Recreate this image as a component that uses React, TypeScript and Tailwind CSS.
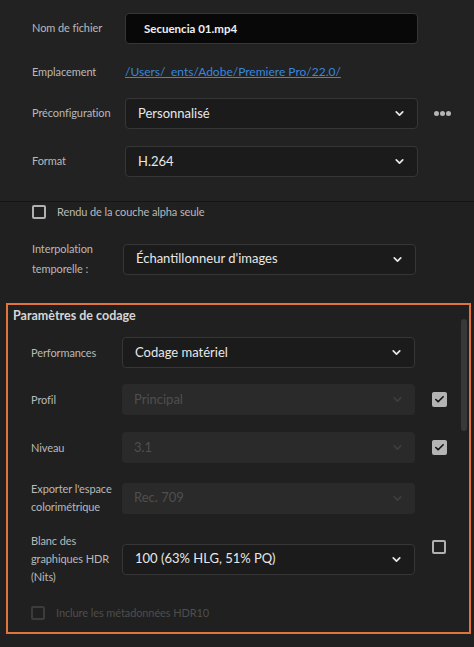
import { ChevronDown, Check } from "lucide-react";

const font = { fontFamily: "Lato, 'Noto Sans', sans-serif" };

function Chevron({ disabled }: { disabled?: boolean }) {
  return (
    <ChevronDown
      size={13}
      strokeWidth={3.2}
      className={disabled ? "text-[#3e3e3e]" : "text-[#e6e6e6]"}
    />
  );
}

function Select({ value, disabled }: { value: string; disabled?: boolean }) {
  return (
    <div
      className={
        disabled
          ? "flex h-[31px] w-[293px] shrink-0 items-center justify-between rounded-[4px] bg-[#2a2a2a] pl-[12px] pr-[11px] text-[13px] text-[#4f4f4f]"
          : "flex h-[31px] w-[293px] shrink-0 items-center justify-between rounded-[4px] border border-[#363636] bg-[#1b1b1b] pl-[12px] pr-[11px] text-[13px] text-[#e8e8e8]"
      }
    >
      <span>{value}</span>
      <Chevron disabled={disabled} />
    </div>
  );
}

function Box({ checked, disabled }: { checked?: boolean; disabled?: boolean }) {
  if (checked) {
    return (
      <div className="flex h-[15px] w-[15px] shrink-0 items-center justify-center rounded-[2px] bg-[#b4b4b4]">
        <Check size={11} strokeWidth={3.5} className="text-[#111]" />
      </div>
    );
  }
  return (
    <div
      className={
        disabled
          ? "h-[14px] w-[14px] shrink-0 rounded-[2px] border-2 border-[#3c3c3c]"
          : "h-[14px] w-[14px] shrink-0 rounded-[2px] border-2 border-[#b0b0b0]"
      }
    />
  );
}

function Row({
  label,
  children,
  className,
  lh = "leading-[18px]",
}: {
  label: React.ReactNode;
  children: React.ReactNode;
  className?: string;
  lh?: string;
}) {
  return (
    <div className={"flex items-center " + (className ?? "")}>
      <div className={"w-[91px] shrink-0 text-[11px] tracking-[-0.1px] text-[#b9b9b9] " + lh}>
        {label}
      </div>
      {children}
    </div>
  );
}

export default function App() {
  return (
    <div className="h-[647px] w-[474px] overflow-hidden bg-[#202020]" style={font}>
      <div className="bg-[#222222] pb-[24px] pl-[32px] pt-[13px]">
        <div className="flex items-center">
          <div className="w-[93px] shrink-0 text-[11px] tracking-[-0.1px] text-[#b9b9b9]">Nom de fichier</div>
          <div className="flex h-[31px] w-[293px] items-center rounded-[4px] border border-[#363636] bg-[#080808] pl-[18px] text-[11.5px] font-bold text-[#f0f0f0]">
            Secuencia 01.mp4
          </div>
        </div>
        <div className="mt-[18px] flex h-[20px] items-center">
          <div className="w-[93px] shrink-0 text-[11px] tracking-[-0.1px] text-[#b9b9b9]">Emplacement</div>
          <a className="text-[12px] text-[#3b86db] underline decoration-[#3b86db]" href="#">
            /Users/_ents/Adobe/Premiere Pro/22.0/
          </a>
        </div>
        <div className="mt-[16px] flex items-center">
          <div className="w-[93px] shrink-0 text-[11px] tracking-[-0.1px] text-[#b9b9b9]">Préconfiguration</div>
          <Select value="Personnalisé" />
          <div className="ml-[16px] flex gap-[1px]">
            <span className="h-[5px] w-[5px] rounded-full bg-[#b5b5b5]" />
            <span className="h-[5px] w-[5px] rounded-full bg-[#b5b5b5]" />
            <span className="h-[5px] w-[5px] rounded-full bg-[#b5b5b5]" />
          </div>
        </div>
        <div className="mt-[17px] flex items-center">
          <div className="w-[93px] shrink-0 text-[11px] tracking-[-0.1px] text-[#b9b9b9]">Format</div>
          <Select value="H.264" />
        </div>
      </div>
      <div className="h-px bg-[#141414]" />

      <div className="pl-[32px] pt-[3px]">
        <div className="flex h-[14px] items-center gap-[11px]">
          <Box />
          <span className="text-[11px] tracking-[-0.1px] text-[#b9b9b9]">Rendu de la couche alpha seule</span>
        </div>
      </div>

      <div className="mt-[20px] pl-[32px]">
        <Row label={<>Interpolation<br />temporelle :</>} lh="leading-[20px]">
          <Select value="Échantillonneur d'images" />
        </Row>
      </div>

      <div className="ml-[6px] mr-[3px] mt-[24px] flex h-[331px] border-2 border-[#e0743c]">
        <div className="flex-1 pl-[5px]">
          <div className="text-[12.5px] font-bold leading-[22px] text-[#d6d6d6]">
            Paramètres de codage
          </div>
          <div className="pl-[18px]">
            <Row label="Performances" className="mt-[10px]">
              <Select value="Codage matériel" />
            </Row>
            <Row label="Profil" className="mt-[16px]">
              <Select value="Principal" disabled />
              <div className="ml-[17px]">
                <Box checked />
              </div>
            </Row>
            <Row label="Niveau" className="mt-[17px]">
              <Select value="3.1" disabled />
              <div className="ml-[17px]">
                <Box checked />
              </div>
            </Row>
            <Row label={<>Exporter l'espace<br />colorimétrique</>} className="mt-[17px]">
              <Select value="Rec. 709" disabled />
            </Row>
            <Row
              label={<>Blanc des<br />graphiques HDR<br />(Nits)</>}
              className="mt-[16px]"
            >
              <Select value="100 (63% HLG, 51% PQ)" />
              <div className="ml-[17px] self-start pt-[8px]">
                <Box />
              </div>
            </Row>
            <div className="mt-[20px] flex h-[14px] items-center gap-[11px]">
              <Box disabled />
              <span className="text-[11px] tracking-[-0.1px] text-[#4e4e4e]">Inclure les métadonnées HDR10</span>
            </div>
          </div>
        </div>
        <div className="flex w-[8px] flex-col pr-[2px] pt-[14px]">
          <div className="h-[112px] w-[6px] rounded-full bg-[#383838]" />
        </div>
      </div>
    </div>
  );
}
